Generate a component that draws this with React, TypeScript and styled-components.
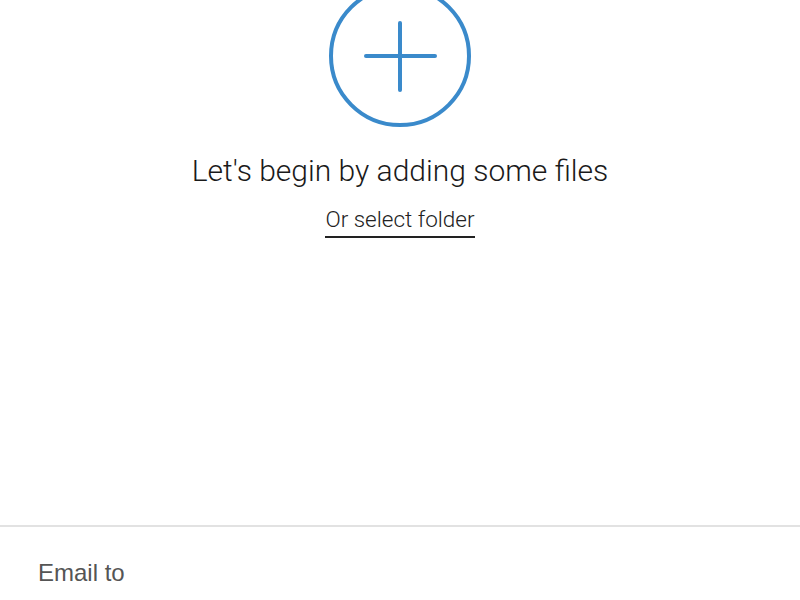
import React from "react";
import styled, { createGlobalStyle } from "styled-components";

const Global = createGlobalStyle`
  html, body { margin: 0; padding: 0; background: #fff; }
  body { font-family: Roboto, "Noto Sans", sans-serif; overflow: hidden; }
  #root { width: 800px; height: 600px; }
`;

const Page = styled.div`
  width: 800px;
  height: 600px;
  display: flex;
  flex-direction: column;
  overflow: hidden;
`;

const Drop = styled.main`
  height: 525px;
  display: flex;
  flex-direction: column;
  align-items: center;
  flex-shrink: 0;
`;

const AddButton = styled.button`
  margin-top: -15px;
  width: 142px;
  height: 142px;
  border: 0;
  padding: 0;
  background: none;
  display: flex;
  align-items: center;
  justify-content: center;
  cursor: pointer;
`;

const Title = styled.h1`
  margin: 24px 0 0;
  font-family: Roboto, sans-serif;
  font-weight: 300;
  font-size: 30px;
  line-height: 40px;
  color: #1a1a1a;
  letter-spacing: 0;
`;

const FolderLink = styled.a`
  margin-top: 14px;
  font-family: Roboto, sans-serif;
  font-weight: 300;
  font-size: 22.5px;
  line-height: 28px;
  color: #222;
  text-decoration: none;
  border-bottom: 2px solid #222;
  padding-bottom: 3px;
  cursor: pointer;
`;

const Footer = styled.footer`
  border-top: 2px solid #e2e2e2;
  flex: 1;
  display: flex;
  align-items: flex-start;
  padding: 32px 38px 0;
`;

const EmailLabel = styled.span`
  font-family: "Liberation Sans", Arial, sans-serif;
  font-size: 24px;
  line-height: 28px;
  color: #555;
`;

export default function App() {
  return (
    <>
      <Global />
      <Page>
        <Drop>
          <AddButton aria-label="Add files">
            <svg width="142" height="142" viewBox="0 0 142 142">
              <circle cx="71" cy="71" r="69" fill="none" stroke="#3a8acb" strokeWidth="4" />
              <line x1="71" y1="38" x2="71" y2="105" stroke="#3a8acb" strokeWidth="4" strokeLinecap="round" />
              <line x1="37" y1="71" x2="106" y2="71" stroke="#3a8acb" strokeWidth="4" strokeLinecap="round" />
            </svg>
          </AddButton>
          <Title>Let's begin by adding some files</Title>
          <FolderLink>Or select folder</FolderLink>
        </Drop>
        <Footer>
          <EmailLabel>Email to</EmailLabel>
        </Footer>
      </Page>
    </>
  );
}
